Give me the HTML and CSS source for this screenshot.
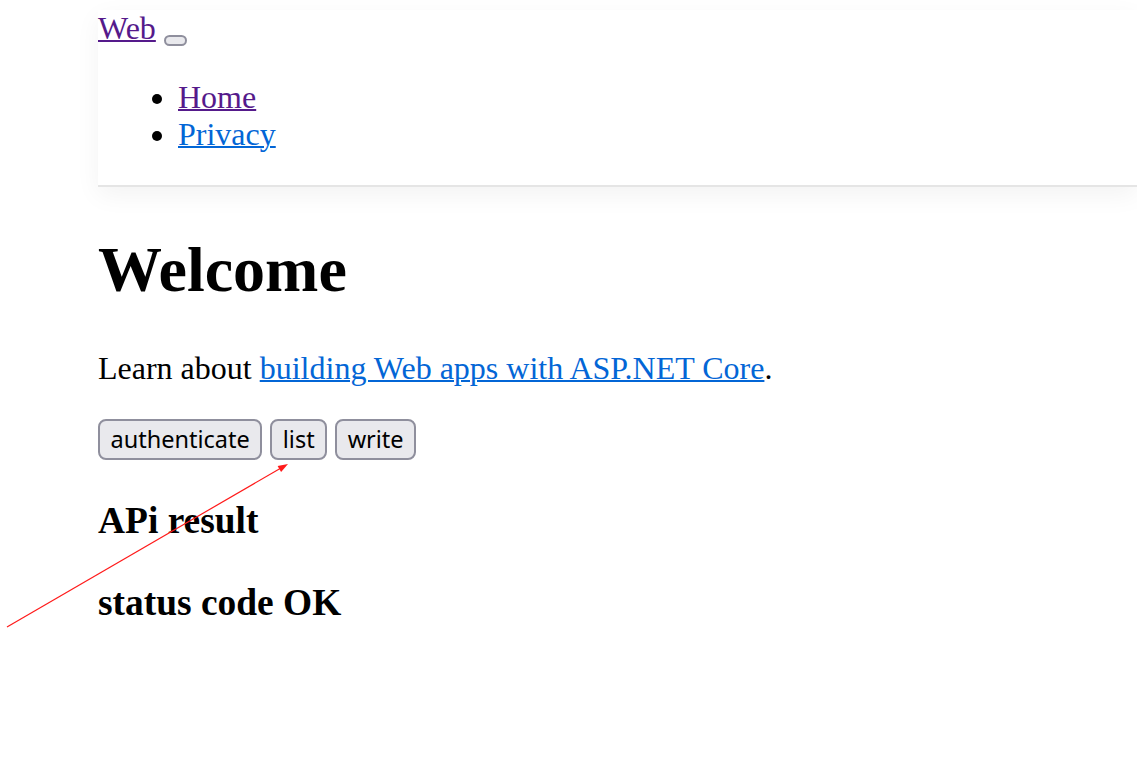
FILE: index.html
```html
<!DOCTYPE html>
<html lang="en">
<head>
<meta charset="utf-8">
<title>Home Page - Web</title>
<link rel="stylesheet" href="styles.css">
</head>
<body>
<div class="page">
  <header>
    <nav class="navbar">
      <div class="nav-container">
        <a class="brand visited" href="#">Web</a> <button class="toggler" type="button" aria-label="Toggle navigation"></button>
        <div class="nav-collapse">
          <ul class="nav-list">
            <li><a class="visited" href="#">Home</a></li>
            <li><a class="link" href="#">Privacy</a></li>
          </ul>
        </div>
      </div>
    </nav>
  </header>
  <main class="main">
    <h1 class="title">Welcome</h1>
    <p class="lead">Learn about <a class="link" href="#">building Web apps with ASP.NET Core</a>.</p>
    <div class="actions">
      <button class="btn" type="button">authenticate</button> <button class="btn" type="button">list</button> <button class="btn" type="button">write</button>
    </div>
    <h3 class="result">APi result</h3>
    <h3 class="result">status code OK</h3>
  </main>
</div>
<svg class="annotation" width="1137" height="780" viewBox="0 0 1137 780" aria-hidden="true">
  <line x1="7" y1="627" x2="281" y2="468" stroke="#ff1a1a" stroke-width="1.2"/>
  <polygon points="288,464 281.1,472.1 277.6,466" fill="#ff1a1a"/>
</svg>
</body>
</html>
```

FILE: styles.css
```css
html, body {
  margin: 0;
  padding: 0;
  background: #ffffff;
}

body {
  font-family: "Liberation Serif", "Times New Roman", serif;
  font-size: 32px;
  color: #000000;
  position: relative;
  min-height: 780px;
}

.page {
  padding: 9.5px 0 0 98px;
}

.navbar {
  background: #ffffff;
  border-bottom: 2px solid #e5e5e5;
  box-shadow: 0 8px 24px rgba(0, 0, 0, 0.05);
}

a {
  text-decoration-thickness: 2px;
}

.visited {
  color: #551a8b;
}

.link {
  color: #0366d6;
}

.toggler {
  display: inline-block;
  width: 23px;
  height: 11px;
  padding: 0;
  margin: 0;
  border: 2px solid #8f8f9d;
  border-radius: 8px;
  background: #e9e9ed;
  vertical-align: -5.5px;
  box-sizing: border-box;
}

.nav-list {
  margin: 32px 0;
  padding-left: 80px;
  list-style: disc;
}

.nav-list li {
  line-height: 37.4px;
}

.title {
  font-size: 64px;
  font-weight: bold;
  margin: 46px 0 43px;
}

.lead {
  margin: 32px 0;
}

.btn {
  font-family: "Noto Sans", "Open Sans", sans-serif;
  font-size: 23.5px;
  line-height: 33px;
  color: #000000;
  background: #e9e9ed;
  border: 2px solid #8f8f9d;
  border-radius: 8px;
  padding: 2px 10.5px;
  margin: 0;
}

.result {
  font-size: 37.44px;
  font-weight: bold;
  margin: 39px 0;
}

.annotation {
  position: absolute;
  top: 0;
  left: 0;
  pointer-events: none;
}
```
